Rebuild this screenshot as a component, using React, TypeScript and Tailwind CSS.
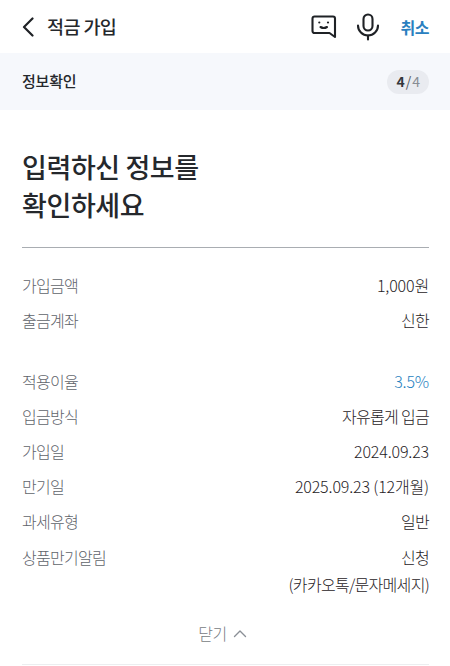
const font = { fontFamily: '"Noto Sans CJK KR", "Noto Sans", sans-serif' };

const Row = ({ label, value, blue, digits }: { label: string; value: string; blue?: boolean; digits?: boolean }) => (
  <div className="flex h-[35px] items-center justify-between text-[16px] font-light tracking-[-0.7px]">
    <span className="text-[#5f646b]">{label}</span>
    <span className={`${blue ? 'text-[#1f7fc0]' : 'text-[#1f2226]'} ${digits ? 'tracking-[-0.15px]' : ''}`}>{value}</span>
  </div>
);

export default function App() {
  return (
    <div style={font} className="h-[666px] w-[450px] overflow-hidden bg-white">
      {/* Header */}
      <div className="flex h-[53px] items-center pl-[22px] pr-[21px]">
        <svg width="12" height="20" viewBox="0 0 12 20" fill="none" stroke="#1f2226" strokeWidth="2.2" strokeLinecap="round" strokeLinejoin="round">
          <path d="M10.5 1.5 L2 10 L10.5 18.5" />
        </svg>
        <span className="ml-[13px] text-[18.5px] font-medium tracking-[-0.6px] text-[#25282c]">적금 가입</span>
        <div className="ml-auto flex items-center">
          <svg width="26" height="26" viewBox="0 0 26 26" fill="none" stroke="#1f2226" strokeWidth="2.1" strokeLinejoin="round" strokeLinecap="round">
            <path d="M3.5 2.5 H22 a2 2 0 0 1 2 2 V23 L18.5 19 H3.5 a2 2 0 0 1 -2 -2 V4.5 a2 2 0 0 1 2 -2 Z" />
            <circle cx="8.3" cy="8.5" r="1.1" fill="#1f2226" stroke="none" />
            <circle cx="17" cy="8.5" r="1.1" fill="#1f2226" stroke="none" />
            <path d="M9.5 13 Q12.7 15 16 13" />
          </svg>
          <svg className="ml-[19px]" width="24" height="28" viewBox="0 0 24 28" fill="none" stroke="#1f2226" strokeWidth="2.1" strokeLinecap="round">
            <rect x="7.5" y="1.5" width="9" height="16" rx="4.5" />
            <path d="M2 12.5 a10 10 0 0 0 20 0" />
            <path d="M12 22.5 V26.5" />
          </svg>
          <span className="ml-[21px] text-[16px] font-bold tracking-[-0.5px] text-[#2a7fc0]">취소</span>
        </div>
      </div>

      {/* Step bar */}
      <div className="flex h-[57px] items-center justify-between bg-[#f6f8fc] pl-[22px] pr-[21px]">
        <span className="text-[15px] font-medium tracking-[-0.2px] text-[#25282c]">정보확인</span>
        <span className="flex h-[24px] items-center rounded-full bg-[#e9ebf0] px-[9px] text-[14px]">
          <span className="font-bold text-[#33373c]">4</span>
          <span className="mx-[1px] text-[#555a60]">/</span>
          <span className="text-[#888d94]">4</span>
        </span>
      </div>

      {/* Content */}
      <div className="px-[22px] pr-[21px]">
        <h1 className="mt-[38px] text-[27px] font-medium leading-[38px] tracking-[-0.4px] text-[#25282c]">
          입력하신 정보를
          <br />
          확인하세요
        </h1>
        <div className="mt-[23px] h-px bg-[#a9adb2]" />

        <div className="mt-[19px]">
          <Row label="가입금액" value="1,000원" digits />
          <Row label="출금계좌" value="신한" />
        </div>
        <div className="mt-[26px]">
          <Row label="적용이율" value="3.5%" blue digits />
          <Row label="입금방식" value="자유롭게 입금" />
          <Row label="가입일" value="2024.09.23" digits />
          <Row label="만기일" value="2025.09.23 (12개월)" digits />
          <Row label="과세유형" value="일반" />
          <div className="flex items-start justify-between pt-[6px] text-[16px] font-light leading-[27px] tracking-[-0.7px]">
            <span className="text-[#5f646b]">상품만기알림</span>
            <span className="text-right text-[#1f2226]">
              신청
              <br />
              (카카오톡/문자메세지)
            </span>
          </div>
        </div>

        <div className="mt-[23px] flex items-center justify-center pr-[6px] text-[16px] font-light tracking-[-0.5px] text-[#777c83]">
          <span>닫기</span>
          <svg className="ml-[6px]" width="14" height="9" viewBox="0 0 14 9" fill="none" stroke="#8a8f96" strokeWidth="1.4" strokeLinecap="round" strokeLinejoin="round">
            <path d="M1.5 7.5 L7 2 L12.5 7.5" />
          </svg>
        </div>
        <div className="mt-[19px] h-px bg-[#eceef0]" />
      </div>
    </div>
  );
}
